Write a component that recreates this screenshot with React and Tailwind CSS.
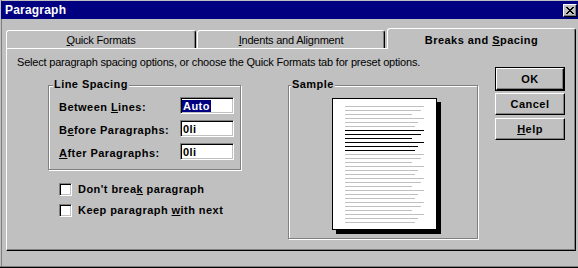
const raised = 'border border-t-white border-l-white border-r-black border-b-black shadow-[inset_-1px_-1px_0_#808080]';
const sunken = 'bg-white border border-t-[#808080] border-l-[#808080] border-r-white border-b-white shadow-[inset_1px_1px_0_#000,inset_-1px_-1px_0_#c0c0c0]';
const bold = 'font-bold tracking-[0.45px]';

// sample page: 6 grey lines, 6 black (the selected paragraph), 18 grey
const widths = [79, 76, 67, 79, 73, 70];
const sampleLines = [
  ...Array.from({ length: 6 }, (_, i) => ({ w: widths[i % 6], dark: false })),
  ...Array.from({ length: 6 }, (_, i) => ({ w: widths[i % 6], dark: true })),
  ...Array.from({ length: 18 }, (_, i) => ({ w: widths[i % 6], dark: false })),
];

const U = ({ children }) => <span className="underline decoration-1 underline-offset-[1px]">{children}</span>;

function GroupBox({ label, className, labelLeft, children }) {
  return (
    <div className={`relative border border-[#808080] shadow-[1px_1px_0_#fff,inset_1px_1px_0_#fff] ${className}`}>
      <span className={`absolute -top-[8px] ${labelLeft} bg-[#c0c0c0] px-[1px] text-[11px] leading-[13px] ${bold}`}>{label}</span>
      {children}
    </div>
  );
}

function Field({ label, value, selected }) {
  return (
    <div className="grid grid-cols-[121px_54px] h-[17px] items-start">
      <span className={`mt-[4px] text-[11px] leading-[13px] ${bold}`}>{label}</span>
      <div className={`h-[17px] flex items-center pl-[1px] pt-[1px] ${sunken}`}>
        <span className={`text-[11px] leading-[12px] px-[1px] ${bold} ${selected ? 'bg-[#000080] text-white' : ''}`}>{value}</span>
      </div>
    </div>
  );
}

function Check({ children }) {
  return (
    <div className="flex items-center h-[13px]">
      <div className={`w-[13px] h-[13px] shrink-0 ${sunken}`} />
      <span className={`ml-[6px] text-[11px] leading-[13px] ${bold}`}>{children}</span>
    </div>
  );
}

export default function App() {
  return (
    <div className="w-[578px] h-[268px] bg-[#c0c0c0] flex flex-col font-['Liberation_Sans',Arial,sans-serif] text-black overflow-hidden shadow-[inset_0_-1px_0_#000,inset_0_-2px_0_#808080,inset_1px_0_0_#c0c0c0,inset_2px_0_0_#808080]">
      {/* title bar */}
      <div className="mt-[1px] ml-[1px] h-[18px] bg-[#000080] flex items-center justify-between pl-[4px] pr-[1px]">
        <span className={`text-white text-[12px] leading-[13px] font-bold tracking-[0.2px]`}>Paragraph</span>
        <button className={`w-[14px] h-[13px] bg-[#c0c0c0] flex items-center justify-center ${raised}`}>
          <svg width="8" height="7" viewBox="0 0 8 7" shapeRendering="crispEdges">
            <path d="M0 0h2v1H0zM6 0h2v1H6zM1 1h2v1H1zM5 1h2v1H5zM2 2h4v1H2zM3 3h2v1H3zM2 4h4v1H2zM1 5h2v1H1zM5 5h2v1H5zM0 6h2v1H0zM6 6h2v1H6z" fill="#000" />
          </svg>
        </button>
      </div>

      {/* tabs */}
      <div className="flex items-end pl-[6px] pt-[9px]">
        <div className="w-[190px] h-[18px] rounded-t-[3px] border-l border-t border-r border-l-white border-t-white border-r-black shadow-[inset_-1px_0_0_#808080] flex justify-center pt-[3px]">
          <span className="text-[11px] leading-[13px] tracking-[-0.2px]"><U>Q</U>uick Formats</span>
        </div>
        <div className="ml-[1px] w-[188px] h-[18px] rounded-t-[3px] border-l border-t border-r border-l-white border-t-white border-r-black shadow-[inset_-1px_0_0_#808080] flex justify-center pt-[3px]">
          <span className="text-[11px] leading-[13px] tracking-[-0.2px]"><U>I</U>ndents and Alignment</span>
        </div>
        <div className="relative z-10 ml-[2px] w-[189px] h-[21px] -mb-[1px] bg-[#c0c0c0] rounded-t-[3px] border-l border-t border-r border-l-white border-t-white border-r-black shadow-[inset_-1px_0_0_#808080] flex justify-center pt-[5px]">
          <span className={`text-[11px] leading-[13px] ${bold}`}>Breaks and <U>S</U>pacing</span>
        </div>
      </div>

      {/* tab page */}
      <div className={`ml-[6px] w-[570px] h-[203px] flex ${raised}`}>
        <div className="w-[488px] flex flex-col">
          <p className="pt-[7px] pl-[10px] text-[11px] leading-[13px] tracking-[-0.2px]">
            Select paragraph spacing options, or choose the Quick Formats tab for preset options.
          </p>
          <div className="mt-[16px] ml-[41px] flex items-start">
            <div className="w-[193px] flex flex-col">
              <GroupBox label="Line Spacing" labelLeft="left-[4px]" className="h-[85px] pt-[11px] pl-[10px] flex flex-col gap-[6px]">
                <Field label={<>Between <U>L</U>ines:</>} value="Auto" selected />
                <Field label={<>B<U>e</U>fore Paragraphs:</>} value="0li" />
                <Field label={<><U>A</U>fter Paragraphs:</>} value="0li" />
              </GroupBox>
              <div className="mt-[13px] pl-[11px] flex flex-col gap-[8px]">
                <Check>Don't brea<U>k</U> paragraph</Check>
                <Check>Keep paragraph <U>w</U>ith next</Check>
              </div>
            </div>
            <GroupBox label="Sample" labelLeft="left-[2px]" className="ml-[47px] w-[190px] h-[154px] pt-[12px] pl-[43px]">
              <div className="w-[105px] h-[132px] bg-white border border-black shadow-[4px_4px_0_#000] pt-[7px] pl-[12px] flex flex-col gap-[3px]">
                {sampleLines.map((l, i) => (
                  <div key={i} className={`h-px ${l.dark ? 'bg-black' : 'bg-[#c0c0c0]'}`} style={{ width: l.w }} />
                ))}
              </div>
            </GroupBox>
          </div>
        </div>

        {/* buttons */}
        <div className="pt-[18px] w-[70px] flex flex-col">
          <div className="h-[24px] border border-black">
            <div className={`h-full flex items-center justify-center text-[11px] leading-[13px] ${bold} ${raised}`}>OK</div>
          </div>
          <div className={`mt-[2px] h-[22px] flex items-center justify-center text-[11px] leading-[13px] ${bold} ${raised}`}>Cancel</div>
          <div className={`mt-[3px] h-[22px] flex items-center justify-center text-[11px] leading-[13px] ${bold} ${raised}`}><U>H</U>elp</div>
        </div>
      </div>
    </div>
  );
}
